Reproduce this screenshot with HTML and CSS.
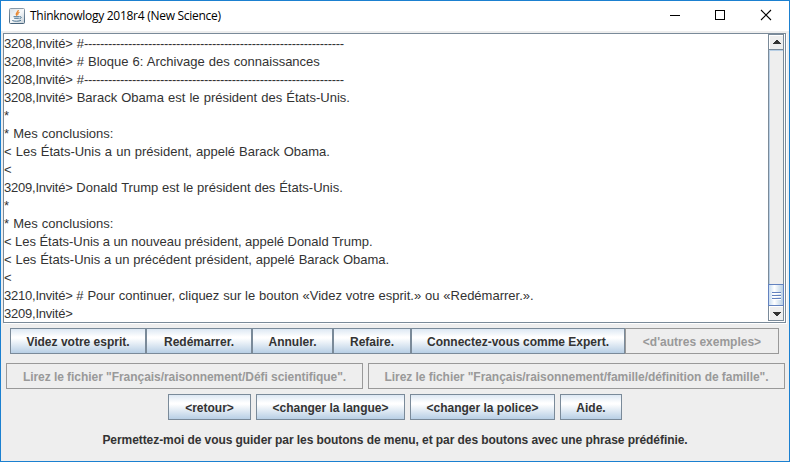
FILE: index.html
```html
<!DOCTYPE html>
<html lang="fr">
<head>
<meta charset="utf-8">
<title>Thinknowlogy 2018r4 (New Science)</title>
<link rel="stylesheet" href="styles.css">
</head>
<body>
<div class="window">
  <header class="titlebar">
    <svg class="app-icon" width="16" height="16" viewBox="0 0 16 16">
      <defs><linearGradient id="tile" x1="0" y1="0" x2="0" y2="1"><stop offset="0" stop-color="#8a9aa8"/><stop offset="1" stop-color="#47637b"/></linearGradient>
      <linearGradient id="face" x1="0" y1="0" x2="1" y2="1"><stop offset="0" stop-color="#d6dee4"/><stop offset=".5" stop-color="#f7f9fa"/><stop offset="1" stop-color="#c3ced6"/></linearGradient></defs>
      <rect x=".5" y=".5" width="15" height="15" rx="1" fill="url(#face)" stroke="url(#tile)"/>
      <path d="M9.3 2C9.6 4 5.8 4.600 7.700 7.800M10.500 4.300C8.500 5.200 8.400 6 9 7.300" fill="none" stroke="#e8852c" stroke-width="1.200"/>
      <path d="M4.500 8.700H10.500M5.200 10.300H9.800M3.300 12.500C5 13.500 10 13.500 12 12.300M10.700 8.700C13 8.300 12.500 10.500 10.500 10.700" fill="none" stroke="#4d7593"/>
    </svg>
    <h1 class="title">Thinknowlogy 2018r4 (New Science)</h1>
    <svg class="controls" width="108" height="12" viewBox="0 0 108 12" fill="none" stroke="#000">
      <path d="M0 6.500H10"/><rect x="45.500" y="1.500" width="9" height="9"/><path d="M91 1L101 11M101 1L91 11" stroke-width="1.100"/>
    </svg>
  </header>
  <main class="scrollpane">
    <div class="console">
      <p><span class="prompt">3208,Invité&gt;</span> #<span class="rule">-----------------------------------------------------------------</span></p>
      <p><span class="prompt">3208,Invité&gt;</span> # Bloque 6: Archivage des connaissances</p>
      <p><span class="prompt">3208,Invité&gt;</span> #<span class="rule">-----------------------------------------------------------------</span></p>
      <p><span class="prompt">3208,Invité&gt;</span> Barack Obama est le président des États-Unis.</p>
      <p>*</p>
      <p>* Mes conclusions:</p>
      <p>&lt; Les États-Unis a un président, appelé Barack Obama.</p>
      <p>&lt;</p>
      <p class="tight"><span class="prompt">3209,Invité&gt;</span> Donald Trump est le président des États-Unis.</p>
      <p>*</p>
      <p>* Mes conclusions:</p>
      <p class="dense">&lt; Les États-Unis a un nouveau président, appelé Donald Trump.</p>
      <p class="tight">&lt; Les États-Unis a un précédent président, appelé Barack Obama.</p>
      <p>&lt;</p>
      <p class="tight"><span class="prompt">3210,Invité&gt;</span> # Pour continuer, cliquez sur le bouton «Videz votre esprit.» ou «Redémarrer.».</p>
      <p><span class="prompt">3209,Invité&gt;</span></p>
    </div>
    <div class="scrollbar">
      <div class="arrow up"><svg width="8" height="4" viewBox="0 0 8 4" shape-rendering="crispEdges"><path d="M3 0H5V1H6V2H7V3H8V4H0V3H1V2H2V1H3Z" fill="#333"/></svg></div>
      <div class="track"></div>
      <div class="thumb"><i></i><i></i><i></i></div>
      <div class="arrow down"><svg width="8" height="4" viewBox="0 0 8 4" shape-rendering="crispEdges"><path d="M0 0H8V1H7V2H6V3H5V4H3V3H2V2H1V1H0Z" fill="#333"/></svg></div>
    </div>
  </main>
  <div class="row commands">
    <button class="w136">Videz votre esprit.</button><button class="w106">Redémarrer.</button><button class="w81">Annuler.</button><button class="w78">Refaire.</button><button class="w214">Connectez-vous comme Expert.</button><button class="w154" disabled>&lt;d'autres exemples&gt;</button>
  </div>
  <div class="row files">
    <button class="w357" disabled>Lirez le fichier "Français/raisonnement/Défi scientifique".</button>
    <button class="w417" disabled>Lirez le fichier "Français/raisonnement/famille/définition de famille".</button>
  </div>
  <div class="row options">
    <button class="w83">&lt;retour&gt;</button>
    <button class="w149">&lt;changer la langue&gt;</button>
    <button class="w145">&lt;changer la police&gt;</button>
    <button class="w62">Aide.</button>
  </div>
  <p class="hint">Permettez-moi de vous guider par les boutons de menu, et par des boutons avec une phrase prédéfinie.</p>
</div>
</body>
</html>
```
FILE: styles.css
```css
* { box-sizing: border-box; }
body { margin: 0; font-family: "Liberation Sans", Arial, sans-serif; color: #333; }
p, h1 { margin: 0; }
.window { width: 790px; height: 462px; border: 1px solid #1b80d0; background: #eee; overflow: hidden; }
.titlebar { height: 30px; background: #fff; display: flex; align-items: center; padding: 0 11px 0 8px; }
.app-icon { margin: -1px 5px 0 0; }
.controls { margin-top: -2px; }
.title { font: 400 12px/16px "Open Sans", "Noto Sans", sans-serif; letter-spacing: -.28px; color: #000; flex: 1; }
.scrollpane { margin: 2px 3px 0 2px; width: 783px; height: 290px; border: 1px solid #7a8a99; background: #fff; display: flex; box-shadow: 1px 1px #fff; }
.console { flex: 1; white-space: nowrap; font-size: 13px; line-height: 18px; padding-top: 1px; overflow: hidden; word-spacing: .5px; }
.console p { height: 18px; }
.tight { word-spacing: .2px; }
.dense { word-spacing: -.2px; }
.prompt { letter-spacing: -.22px; }
.rule { letter-spacing: -.33px; }
.scrollbar { width: 17px; height: 287px; border-right: 1px solid #fff; display: flex; flex-direction: column; }
.scrollbar > * { width: 16px; border: 1px solid #7a8a99; }
.arrow { height: 16px; background: #eee; display: flex; align-items: center; justify-content: center; box-shadow: inset 1px 1px #fff; padding-left: 1px; }
.scrollbar .down { height: 15px; border-top: 0; padding-top: 1px; }
.scrollbar .track { flex: 1; background: #eee; border-width: 0 1px; box-shadow: inset 1px 1px #b8cfe5; }
.scrollbar .thumb { height: 22px; border-color: #6382bf; background: linear-gradient(90deg, #c8ddf2, #fff 38%, #b8cfe5); display: flex; flex-direction: column; align-items: center; justify-content: center; gap: 1px; padding: 1px 0 0 1px; }
.thumb i { width: 9px; height: 2px; border-top: 1px solid #6382bf; background: #fff; }
.row { display: flex; justify-content: center; }
.commands { margin-top: 5px; padding-right: 1px; }
.files { margin-top: 9px; gap: 5px; padding-left: 1px; }
.options { margin-top: 5px; gap: 5px; }
button { flex: none; height: 26px; padding: 2px 0 0; font: 700 12px/22px "Liberation Sans", Arial, sans-serif; color: #333; white-space: nowrap; border: 1px solid #7a8a99; background: linear-gradient(#dde8f3, #fff 33%, #fff 38%, #b8cfe5); }
button:disabled { color: #999; border-color: #999; background: #eee; }
.files button { letter-spacing: -.05px; }
.w136 { width: 136px; } .w106 { width: 106px; } .w81 { width: 81px; } .w78 { width: 78px; } .w214 { width: 214px; } .w154 { width: 154px; }
.w357 { width: 357px; } .w417 { width: 417px; } .w83 { width: 83px; } .w149 { width: 149px; } .w145 { width: 145px; } .w62 { width: 62px; }
.hint { margin-top: 12px; text-align: center; font-size: 12px; line-height: 16px; font-weight: 700; letter-spacing: -.07px; }
```
